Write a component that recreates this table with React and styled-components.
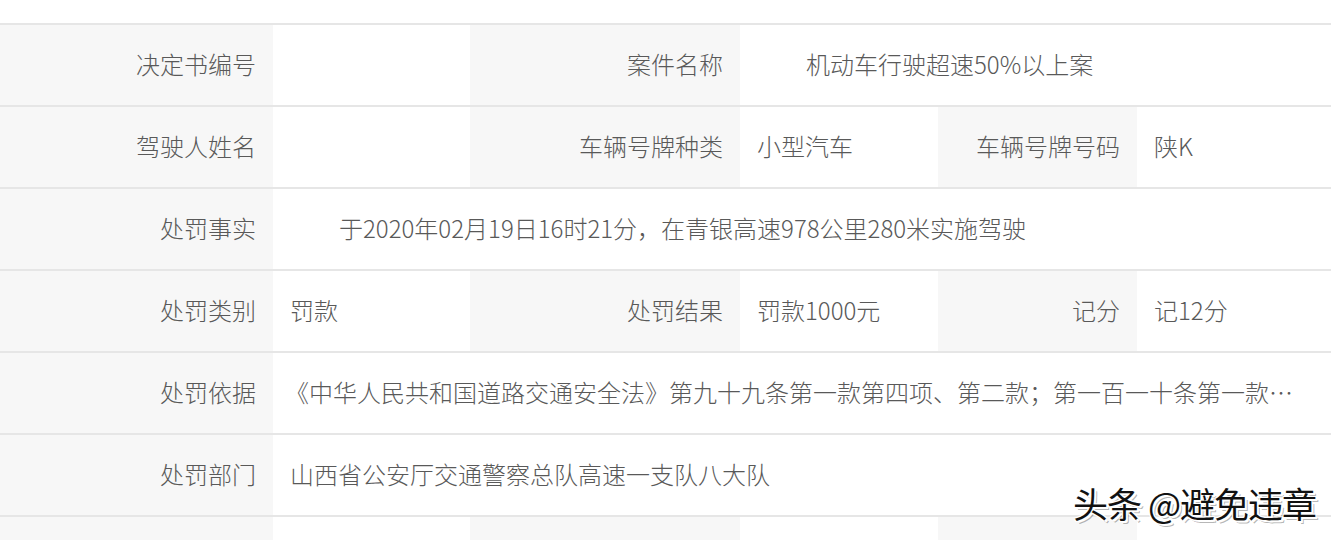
import React from "react";
import styled, { createGlobalStyle } from "styled-components";

const GlobalStyle = createGlobalStyle`
  html, body {
    margin: 0;
    padding: 0;
    background: #fff;
    overflow: hidden;
  }
  body {
    font-family: "Noto Sans CJK SC", "Noto Sans", sans-serif;
  }
`;

const Page = styled.div`
  position: relative;
  width: 1331px;
  height: 540px;
  padding-top: 23px;
  box-sizing: border-box;
  overflow: hidden;
`;

const Table = styled.div`
  border-top: 2px solid #e6e6e6;
`;

const Row = styled.div`
  display: grid;
  grid-template-columns: 273px 197px 270px 198px 199px 1fr;
  height: 80px;
  border-bottom: 2px solid #e6e6e6;
`;

const Label = styled.div`
  background: #f7f7f7;
  display: flex;
  align-items: center;
  justify-content: flex-end;
  padding: 0 17px 4px 0;
  font-size: 24px;
  font-weight: 300;
  color: #595959;
  white-space: nowrap;
`;

const Value = styled.div`
  grid-column: ${(p) => (p.span ? `span ${p.span}` : "auto")};
  background: #fff;
  display: flex;
  align-items: center;
  padding: 0 0 4px ${(p) => p.indent || 17}px;
  font-size: 24px;
  font-weight: 300;
  color: #595959;
  white-space: nowrap;
  overflow: hidden;
`;

const Watermark = styled.div`
  position: absolute;
  right: 15px;
  bottom: 12px;
  font-size: 35px;
  font-weight: 400;
  color: #111;
  letter-spacing: -1px;
  text-shadow: 2px 2px 0 #fff, -1px -1px 0 #fff, 1px -1px 0 #fff, -1px 1px 0 #fff,
    3px 3px 0 rgba(0, 0, 0, 0.3);
`;

const rows = [
  [
    { label: "决定书编号" },
    { value: "" },
    { label: "案件名称" },
    { value: "机动车行驶超速50%以上案", span: 3, indent: 66 },
  ],
  [
    { label: "驾驶人姓名" },
    { value: "" },
    { label: "车辆号牌种类" },
    { value: "小型汽车" },
    { label: "车辆号牌号码" },
    { value: "陕K" },
  ],
  [
    { label: "处罚事实" },
    {
      value: "于2020年02月19日16时21分，在青银高速978公里280米实施驾驶",
      span: 5,
      indent: 66,
    },
  ],
  [
    { label: "处罚类别" },
    { value: "罚款" },
    { label: "处罚结果" },
    { value: "罚款1000元" },
    { label: "记分" },
    { value: "记12分" },
  ],
  [
    { label: "处罚依据" },
    {
      value:
        "《中华人民共和国道路交通安全法》第九十九条第一款第四项、第二款；第一百一十条第一款…",
      span: 5,
      indent: 12,
    },
  ],
  [
    { label: "处罚部门" },
    { value: "山西省公安厅交通警察总队高速一支队八大队", span: 5 },
  ],
  [
    { label: "" },
    { value: "" },
    { label: "" },
    { value: "" },
    { label: "" },
    { value: "" },
  ],
];

export default function App() {
  return (
    <Page>
      <GlobalStyle />
      <Table>
        {rows.map((cells, i) => (
          <Row key={i}>
            {cells.map((c, j) =>
              c.label !== undefined ? (
                <Label key={j}>{c.label}</Label>
              ) : (
                <Value key={j} span={c.span} indent={c.indent}>
                  {c.value}
                </Value>
              )
            )}
          </Row>
        ))}
      </Table>
      <Watermark>头条 @避免违章</Watermark>
    </Page>
  );
}
